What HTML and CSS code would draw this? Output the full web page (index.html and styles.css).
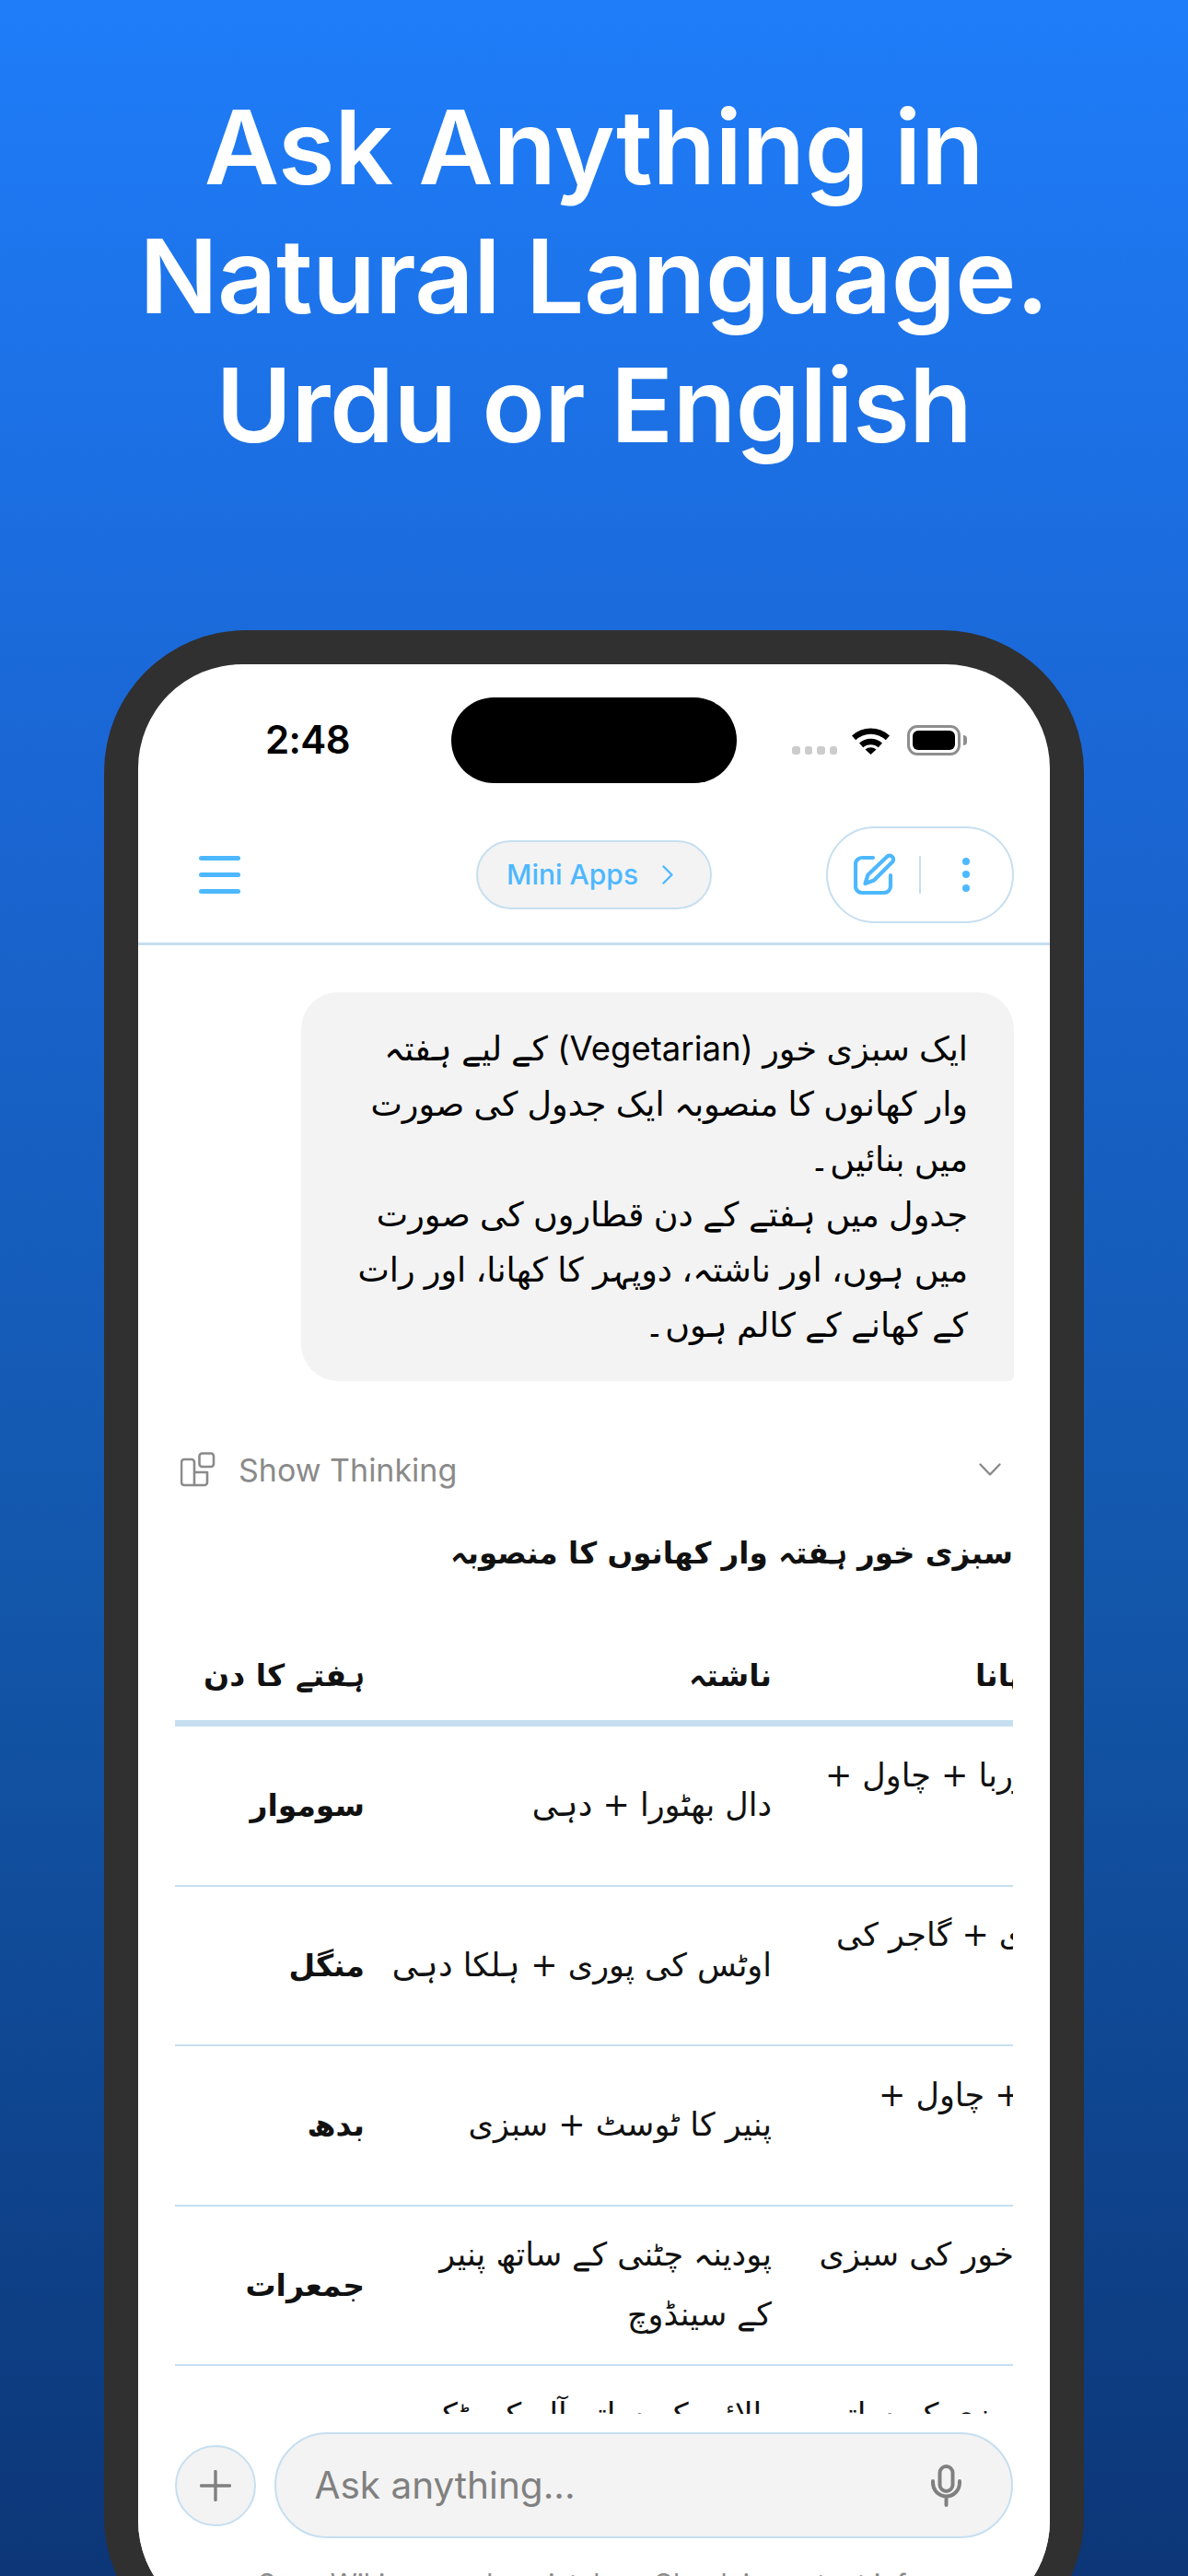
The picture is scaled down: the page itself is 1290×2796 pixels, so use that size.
FILE: index.html
```html
<!DOCTYPE html>
<html lang="en">
<head>
<meta charset="utf-8">
<title>Ask Anything</title>
<link rel="stylesheet" href="styles.css">
</head>
<body>
<h1 class="headline">Ask Anything in<br>Natural Language.<br>Urdu or English</h1>
<div class="phone">
  <div class="screen">
    <div class="status">
      <span class="time">2:48</span>
      <span class="island"></span>
      <span class="status-icons">
        <span class="dots"><i></i><i></i><i></i><i></i></span>
        <svg class="wifi" width="41" height="31" viewBox="0 0 41 31"><path d="M0 10.5a30 30 0 0 1 41 0l-4.2 4.8a23.500 23.500 0 0 0-32.600 0zM8 18.500a19 19 0 0 1 25 0l-4.200 4.800a12.500 12.500 0 0 0-16.600 0zM14.500 25.500a9 9 0 0 1 12 0l-6 5.500z" fill="#000"/></svg>
        <span class="battery"><span class="battery-fill"></span></span>
      </span>
    </div>
    <div class="nav">
      <span class="burger"><i></i><i></i><i></i></span>
      <span class="mini">Mini Apps
        <svg width="12" height="21" viewBox="0 0 12 21"><path d="M1.500 1.500l9 9-9 9" fill="none" stroke="#4db8ff" stroke-width="2.400" stroke-linecap="round" stroke-linejoin="round"/></svg>
      </span>
      <span class="actions">
        <svg width="45" height="46" viewBox="0 0 45 46" fill="none" stroke="#4db8ff" stroke-width="4.200" stroke-linecap="round" stroke-linejoin="round"><path d="M21 5H9a7 7 0 0 0-7 7v24a7 7 0 0 0 7 7h24a7 7 0 0 0 7-7V24"/><path d="M12.500 33l3-9.500L36 4a4 4 0 0 1 6 5.500L22 29.500z"/></svg>
        <i class="sep"></i>
        <span class="kebab"><i></i><i></i><i></i></span>
      </span>
    </div>
    <div class="chat">
      <div class="bubble" dir="rtl">ایک سبزی خور (Vegetarian) کے لیے ہفتہ<br>وار کھانوں کا منصوبہ ایک جدول کی صورت<br>میں بنائیں۔<br>جدول میں ہفتے کے دن قطاروں کی صورت<br>میں ہوں، اور ناشتہ، دوپہر کا کھانا، اور رات<br>کے کھانے کے کالم ہوں۔</div>
      <div class="thinking">
        <svg width="38" height="38" viewBox="0 0 38 38" fill="none" stroke="#8a8a8a" stroke-width="2.600" stroke-linejoin="round"><path d="M15 22V11a3 3 0 0 0-3-3H4a3 3 0 0 0-3 3v22a3 3 0 0 0 3 3h22a3 3 0 0 0 3-3V22zM15 22v14"/><rect x="20.500" y="1.500" width="15.500" height="14.500" rx="3"/></svg>
        <span class="thinking-label">Show Thinking</span>
        <svg class="chev" width="24" height="14" viewBox="0 0 24 14"><path d="M1.500 1.500 12 12.500 22.500 1.500" fill="none" stroke="#8a8a8a" stroke-width="2.400" stroke-linecap="round" stroke-linejoin="round"/></svg>
      </div>
      <div class="scroll" dir="rtl">
        <h2 class="plan-title">سبزی خور ہفتہ وار کھانوں کا منصوبہ</h2>
        <div class="table">
          <div class="row head"><span class="c3">دوپہر کا کھانا</span><span class="c2">ناشتہ</span><span class="c1">ہفتے کا دن</span></div>
          <div class="row"><span class="c3">سبزی شوربا + چاول +<br>سلاد</span><span class="c2">دال بھٹورا + دہی</span><span class="c1">سوموار</span></div>
          <div class="row"><span class="c3">پالک سبزی + گاجر کی<br>سلاد</span><span class="c2">اوٹس کی پوری + ہلکا دہی</span><span class="c1">منگل</span></div>
          <div class="row"><span class="c3">پالک دال + چاول +<br>سلاد</span><span class="c2">پنیر کا ٹوسٹ + سبزی</span><span class="c1">بدھ</span></div>
          <div class="row"><span class="c3">ملی جلی خور کی سبزی<br>روٹی</span><span class="c2">پودینہ چٹنی کے ساتھ پنیر<br>کے سینڈوچ</span><span class="c1">جمعرات</span></div>
          <div class="row"><span class="c3">لوبیا کی سبزی کے ساتھ<br>روٹی</span><span class="c2">بالائی کے ساتھ آلو کی ٹکی<br>اور چائے</span><span class="c1">جمعہ</span></div>
        </div>
      </div>
    </div>
    <div class="composer">
      <div class="composer-row">
        <span class="plus"><svg width="34" height="34" viewBox="0 0 34 34"><path d="M17 1.500v31M1.500 17h31" stroke="#808080" stroke-width="3.400" stroke-linecap="round"/></svg></span>
        <div class="field">
          <span class="placeholder">Ask anything...</span>
          <svg width="33" height="46" viewBox="0 0 33 46" fill="none" stroke="#808080" stroke-width="4" stroke-linecap="round"><rect x="9.500" y="2" width="14" height="27" rx="7"/><path d="M2 18v2a14.500 14.500 0 0 0 29 0v-2M16.500 35v9"/></svg>
        </div>
      </div>
      <p class="note">Scan Wiki can make mistakes. Check important info.</p>
    </div>
  </div>
</div>
</body>
</html>
```

FILE: styles.css
```css
* { box-sizing: border-box; }
html, body { margin: 0; height: 2796px; overflow: hidden; }
body {
  background: linear-gradient(180deg, #1f7df9 0%, #1a66d4 30%, #1358ad 60%, #0c3677 100%);
  font-family: Inter, "DejaVu Sans", sans-serif;
  display: flex;
  flex-direction: column;
  align-items: center;
}
.headline {
  flex: none;
  margin: 89px 0 0;
  height: 595px;
  font-size: 112px;
  line-height: 140px;
  font-weight: 600;
  color: #fff;
  text-align: center;
  letter-spacing: -0.4px;
}
.phone {
  width: 1064px;
  flex: none;
  background: #303030;
  padding: 37px;
  border-radius: 154px;
}
.screen {
  background: #fff;
  border-radius: 113px;
  height: 2128px;
  overflow: hidden;
  display: flex;
  flex-direction: column;
}
.status {
  height: 180px;
  flex: none;
  display: flex;
  align-items: flex-start;
  padding-top: 36px;
}
.time {
  margin: 19px 0 0 138px;
  width: 202px;
  font-size: 42px;
  line-height: 54px;
  font-weight: 600;
  letter-spacing: -0.6px;
  color: #000;
}
.island {
  width: 310px;
  height: 93px;
  background: #000;
  border-radius: 47px;
}
.status-icons {
  margin: 30px 0 0 60px;
  display: flex;
  align-items: flex-start;
}
.dots { display: flex; gap: 5px; margin-top: 23px; margin-right: 16px; }
.dots i { width: 8.500px; height: 9px; background: #cccccc; border-radius: 3px; }
.wifi { margin-top: 1px; margin-right: 19px; }
.battery {
  width: 58px;
  height: 33px;
  border: 3px solid #8e8e8e;
  border-radius: 11px;
  padding: 3px;
  display: flex;
  position: relative;
}
.battery::after {
  content: "";
  position: absolute;
  right: -10px;
  top: 8px;
  width: 4px;
  height: 11px;
  background: #8e8e8e;
  border-radius: 0 4px 4px 0;
}
.battery-fill { flex: 1; background: #000; border-radius: 6px; }
.nav {
  height: 125px;
  flex: none;
  display: flex;
  align-items: center;
  border-bottom: 3px solid #c6dff0;
  padding-bottom: 26px;
}
.burger {
  margin-left: 66px;
  width: 45px;
  display: flex;
  flex-direction: column;
  gap: 13px;
}
.burger i { height: 5px; border-radius: 3px; background: #4db8ff; }
.mini {
  margin-left: 256px;
  width: 256px;
  height: 75px;
  border: 2.500px solid #c6dff0;
  border-radius: 38px;
  background: #f3f3f3;
  color: #4db8ff;
  font-size: 30px;
  font-weight: 500;
  display: flex;
  align-items: center;
  padding-left: 31px;
  gap: 26px;
}
.actions {
  margin-left: 124px;
  width: 204px;
  height: 105px;
  border: 2.500px solid #c6dff0;
  border-radius: 53px;
  display: flex;
  align-items: center;
  padding-left: 27.500px;
}
.sep { width: 2.500px; height: 41px; background: #c6dff0; margin-left: 26px; }
.kebab { display: flex; flex-direction: column; gap: 6.500px; margin-left: 45px; }
.kebab i { width: 8px; height: 8px; border-radius: 50%; background: #4db8ff; }
.chat {
  flex: none;
  padding: 51px 40px 0;
  height: 1594px;
  overflow: hidden;
}
.bubble {
  margin-left: 137px;
  width: 774px;
  height: 422px;
  background: #f3f3f3;
  border-radius: 40px 40px 6px 40px;
  padding: 31px 50px 0 20px;
  font-family: Inter, "DejaVu Sans", sans-serif;
  font-size: 36.500px;
  line-height: 60px;
  white-space: nowrap;
  color: #000;
}
.thinking {
  margin-top: 77px;
  height: 38px;
  display: flex;
  align-items: center;
  padding-left: 6px;
}
.thinking-label { margin-left: 25px; font-size: 34px; color: #8a8a8a; }
.chev { margin-left: auto; margin-right: 13px; }
.scroll { width: 910px; overflow: hidden; }
.plan-title {
  margin: 42px 0 0;
  font-family: "DejaVu Sans", sans-serif;
  font-size: 32.500px;
  line-height: 60px;
  font-weight: 700;
  white-space: nowrap;
  color: #111;
}
.table { margin-top: 54px; width: 1091px; margin-right: -181px; }
.row {
  display: flex;
  align-items: center;
  height: 173.500px;
  border-bottom: 2.500px solid #c6dff0;
  font-family: "DejaVu Sans", sans-serif;
  font-size: 35px;
  line-height: 65px;
  white-space: nowrap;
  color: #111;
}
.row.head { height: 104px; border-bottom-width: 7px; font-weight: 700; font-size: 33px; }
.c3 { width: 443px; flex: none; padding-right: 36px; }
.head .c3 { padding-right: 0; }
.c2 { width: 442px; flex: none; }
.c1 { width: 206px; flex: none; font-weight: 700; font-size: 33px; }
.composer {
  flex: none;
  background: #fff;
  padding: 20px 40px 0;
}
.composer-row { display: flex; align-items: center; gap: 20px; }
.plus {
  width: 88px;
  height: 88px;
  flex: none;
  border: 2.500px solid #c6dff0;
  border-radius: 50%;
  background: #f3f3f3;
  display: flex;
  align-items: center;
  justify-content: center;
}
.field {
  flex: 1;
  height: 115px;
  border: 2.500px solid #c6dff0;
  border-radius: 58px;
  background: #f3f3f3;
  display: flex;
  align-items: center;
  justify-content: space-between;
  padding: 0 54.500px 0 41.500px;
}
.placeholder { font-size: 40.500px; color: #808080; }
.note {
  margin: 31px 0 0;
  text-align: center;
  font-size: 29.500px;
  color: #8a8a8a;
}
```
